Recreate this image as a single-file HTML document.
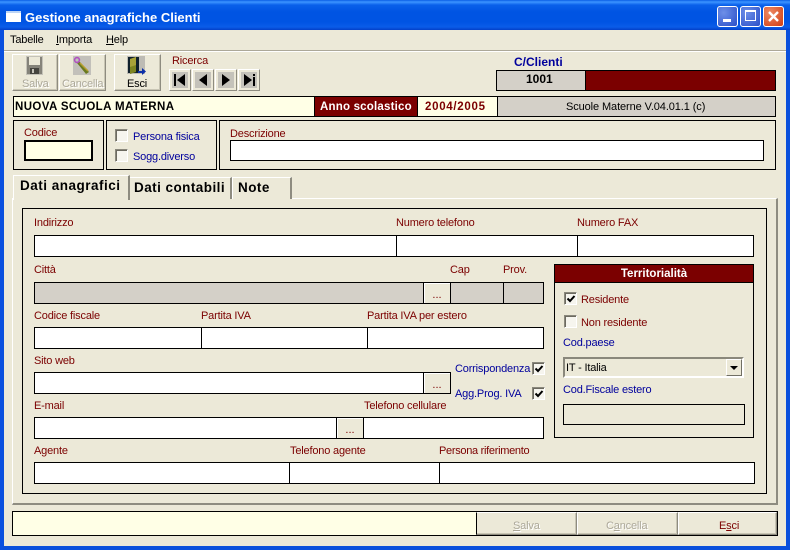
<!DOCTYPE html>
<html><head><meta charset="utf-8"><style>
html,body{margin:0;padding:0;width:790px;height:550px;overflow:hidden;background:#ece9d8}
body{position:relative;font-family:"Liberation Sans",sans-serif;font-size:11px;color:#000}
div,span.a{position:absolute;box-sizing:border-box}
.t{white-space:nowrap;line-height:13px;height:13px;letter-spacing:-.18px}
.r{color:#7b0000;margin-top:1px}.b{color:#00009c;margin-top:1px}
.f{background:#fff;border:1px solid #000;height:22px}
.g{background:#d4d0c8}
.box{border:1px solid #000}
.btn{background:#ece9d8;border:1px solid;border-color:#fff #8e8c80 #8e8c80 #fff;box-shadow:inset -1px -1px 0 #c8c5b4}
.dots{background:#ece9d8;border:1px solid #000;box-shadow:inset 1px 1px 0 #fff;color:#7b0000;text-align:center;line-height:24px;font-size:11px}
.cb{width:13px;height:13px;background:#f6f5ee;border:1px solid;border-color:#8a887c #fff #fff #8a887c;box-shadow:inset 1px 1px 0 #6c6a60}
.cb svg{position:absolute;left:1px;top:1px}
.n{top:69px;width:22px;height:22px;background:#ece9d8;border:1px solid;border-color:#fff #8e8c80 #8e8c80 #fff}
.n svg{position:absolute;left:2px;top:2px}
.wb{top:6px;width:21px;height:21px;border:1px solid #fff;border-radius:3px}
.dis{color:#aca899;text-shadow:1px 1px 0 #fff;margin-top:1px}
u{text-decoration:underline}
</style></head><body>
<!-- window frame -->
<div style="left:0;top:0;width:790px;height:550px;background:#0a50dc"></div>
<div style="left:0;top:0;width:790px;height:30px;background:linear-gradient(#0a5fe6 0,#3d95ff 2px,#0a60ea 5px,#0054e3 12px,#0054e3 22px,#0a5ce8 27px,#0340c8 30px)"></div>
<div style="left:0;top:30px;width:3px;height:520px;background:#0a50e0"></div>
<div style="left:4px;top:30px;width:782px;height:516px;background:#ece9d8"></div>
<!-- title -->
<div style="left:6px;top:11px;width:15px;height:11px;background:#fff;border-top:2px solid #bcd4f5"></div>
<div class="t" style="left:25px;top:10px;font-size:13px;line-height:15px;height:15px;font-weight:bold;color:#fff;letter-spacing:0">Gestione anagrafiche Clienti</div>
<div class="wb" style="left:717px;background:radial-gradient(circle at 30% 30%,#6d8fe8,#2a4fc8)"><div style="left:5px;top:12px;width:8px;height:3px;background:#fff"></div></div>
<div class="wb" style="left:740px;background:radial-gradient(circle at 30% 30%,#6d8fe8,#2a4fc8)"><div style="left:4px;top:3px;width:11px;height:11px;border:1px solid #fff;border-top-width:2px"></div></div>
<div class="wb" style="left:763px;background:radial-gradient(circle at 30% 30%,#ee8a64,#cf3c12)"><svg width="19" height="19" style="position:absolute;left:0;top:0"><path d="M5 5L14 14M14 5L5 14" stroke="#fff" stroke-width="2.4"/></svg></div>
<!-- menu -->
<div class="t" style="left:10px;top:34px">Tabelle</div>
<div class="t" style="left:56px;top:34px"><u>I</u>mporta</div>
<div class="t" style="left:106px;top:34px"><u>H</u>elp</div>
<div style="left:4px;top:50px;width:782px;height:2px;background:#fff;border-top:1px solid #aca899"></div>
<!-- toolbar -->
<div class="btn" style="left:12px;top:54px;width:46px;height:37px"></div>
<svg style="position:absolute;left:26px;top:56px" width="17" height="19"><rect width="17" height="19" fill="#c4c2b8"/><path d="M1 1H16V18H1Z" fill="#85837a"/><rect x="3" y="1" width="11" height="8" fill="#ece9d8"/><rect x="4" y="12" width="9" height="6" fill="#45443e"/><rect x="6" y="13" width="2" height="4" fill="#c4c2b8"/></svg>
<div class="t dis" style="left:22px;top:77px">Salva</div>
<div class="btn" style="left:59px;top:54px;width:47px;height:37px"></div>
<svg style="position:absolute;left:73px;top:56px" width="18" height="19"><rect width="18" height="19" fill="#c2c0ba"/><path d="M6 5L16 16L13 18L4 7Z" fill="#6a7a20"/><path d="M7 7L15 15" stroke="#b8a030" stroke-width="1.5"/><circle cx="4" cy="4" r="2.4" fill="none" stroke="#b050c0" stroke-width="1.6"/></svg>
<div class="t dis" style="left:62px;top:77px">Cancella</div>
<div class="btn" style="left:114px;top:54px;width:47px;height:37px"></div>
<svg style="position:absolute;left:127px;top:56px" width="20" height="20"><rect width="18" height="18" fill="#bdbbb4"/><rect x="1" y="1" width="11" height="16" fill="#10202c"/><path d="M3 3L9 1V16L3 18Z" fill="#7d8420"/><path d="M3 3L9 1V9L3 11Z" fill="#a8a238"/><path d="M11 15H15V12L19 15.5L15 19V17H11Z" fill="#0c2fa8"/></svg>
<div class="t" style="left:127px;top:78px">Esci</div>
<div class="t r" style="left:172px;top:54px">Ricerca</div>
<div class="n" style="left:169px"><svg width="16" height="16"><rect width="16" height="16" fill="#c4c2ba"/><path d="M2 2H4V14H2ZM13 2V14L5 8Z"/></svg></div>
<div class="n" style="left:192px"><svg width="16" height="16"><rect width="16" height="16" fill="#c4c2ba"/><path d="M12 2V14L4 8Z"/></svg></div>
<div class="n" style="left:215px"><svg width="16" height="16"><rect width="16" height="16" fill="#c4c2ba"/><path d="M4 2V14L12 8Z"/></svg></div>
<div class="n" style="left:238px"><svg width="16" height="16"><rect width="16" height="16" fill="#c4c2ba"/><path d="M3 2V14L11 8ZM12 2H14V4H12ZM12 5H14V14H12Z"/></svg></div>
<div class="t b" style="left:514px;top:55px;font-weight:bold;font-size:12px;letter-spacing:0">C/Clienti</div>
<div class="box g" style="left:496px;top:70px;width:90px;height:21px"></div>
<div class="t" style="left:526px;top:73px;font-weight:bold;font-size:12px;letter-spacing:0">1001</div>
<div class="box" style="left:585px;top:70px;width:191px;height:21px;background:#7b0000"></div>
<!-- info bar -->
<div class="box" style="left:13px;top:96px;width:302px;height:21px;background:#ffffe6"></div>
<div class="t" style="left:15px;top:101px;font-weight:bold;font-size:11.5px;letter-spacing:.4px">NUOVA SCUOLA MATERNA</div>
<div style="left:314px;top:96px;width:104px;height:21px;background:#7b0000;border:1px solid #000"></div>
<div class="t" style="left:320px;top:101px;font-weight:bold;color:#fff;font-size:11.5px;letter-spacing:.2px">Anno scolastico</div>
<div class="box" style="left:417px;top:96px;width:81px;height:21px;background:#ffffe6"></div>
<div class="t r" style="left:425px;top:100px;font-weight:bold;font-size:11.5px;letter-spacing:.7px">2004/2005</div>
<div class="box g" style="left:497px;top:96px;width:279px;height:21px"></div>
<div class="t" style="left:566px;top:101px;letter-spacing:-.1px">Scuole Materne V.04.01.1 (c)</div>
<!-- top group boxes -->
<div class="box" style="left:13px;top:120px;width:91px;height:50px"></div>
<div class="t r" style="left:24px;top:126px">Codice</div>
<div style="left:24px;top:140px;width:69px;height:21px;background:#ffffe6;border:2px solid #000"></div>
<div class="box" style="left:106px;top:120px;width:111px;height:50px"></div>
<div class="cb" style="left:115px;top:129px"></div>
<div class="t b" style="left:133px;top:130px">Persona fisica</div>
<div class="cb" style="left:115px;top:149px"></div>
<div class="t b" style="left:133px;top:150px">Sogg.diverso</div>
<div class="box" style="left:219px;top:120px;width:557px;height:50px"></div>
<div class="t r" style="left:230px;top:127px">Descrizione</div>
<div class="f" style="left:230px;top:140px;width:534px;height:21px"></div>
<!-- panel -->
<div style="left:12px;top:198px;width:766px;height:307px;background:#ece9d8;border:1px solid #fff;border-right:2px solid #8e8c80;border-bottom:2px solid #8e8c80"></div>
<!-- tabs -->
<div style="left:130px;top:177px;width:102px;height:22px;background:#ece9d8;border-top:1px solid #fff;border-right:2px solid #8e8c80"></div>
<div style="left:232px;top:177px;width:60px;height:22px;background:#ece9d8;border-top:1px solid #fff;border-right:2px solid #8e8c80;border-left:1px solid #fff"></div>
<div style="left:13px;top:175px;width:117px;height:25px;background:#ece9d8;border-top:1px solid #fff;border-left:1px solid #fff;border-right:2px solid #8e8c80"></div>
<div class="t" style="left:20px;top:178px;font-weight:bold;font-size:13.5px;line-height:15px;height:15px;letter-spacing:.5px">Dati anagrafici</div>
<div class="t" style="left:134px;top:180px;font-weight:bold;font-size:13.5px;line-height:15px;height:15px;letter-spacing:.45px">Dati contabili</div>
<div class="t" style="left:238px;top:180px;font-weight:bold;font-size:13.5px;line-height:15px;height:15px;letter-spacing:.45px">Note</div>
<div class="box" style="left:22px;top:208px;width:745px;height:286px"></div>
<!-- row 1 -->
<div class="t r" style="left:34px;top:216px">Indirizzo</div>
<div class="t r" style="left:396px;top:216px">Numero telefono</div>
<div class="t r" style="left:577px;top:216px">Numero FAX</div>
<div class="f" style="left:34px;top:235px;width:363px"></div>
<div class="f" style="left:396px;top:235px;width:182px"></div>
<div class="f" style="left:577px;top:235px;width:177px"></div>
<!-- row 2 -->
<div class="t r" style="left:34px;top:263px">Città</div>
<div class="t r" style="left:450px;top:263px">Cap</div>
<div class="t r" style="left:503px;top:263px">Prov.</div>
<div class="f g" style="left:34px;top:282px;width:390px"></div>
<div class="dots" style="left:423px;top:282px;width:28px;height:22px">...</div>
<div class="f g" style="left:450px;top:282px;width:54px"></div>
<div class="f g" style="left:503px;top:282px;width:41px"></div>
<!-- row 3 -->
<div class="t r" style="left:34px;top:309px">Codice fiscale</div>
<div class="t r" style="left:201px;top:309px">Partita IVA</div>
<div class="t r" style="left:367px;top:309px">Partita IVA per estero</div>
<div class="f" style="left:34px;top:327px;width:168px"></div>
<div class="f" style="left:201px;top:327px;width:167px"></div>
<div class="f" style="left:367px;top:327px;width:177px"></div>
<!-- row 4 -->
<div class="t r" style="left:34px;top:354px">Sito web</div>
<div class="f" style="left:34px;top:372px;width:390px"></div>
<div class="dots" style="left:423px;top:372px;width:28px;height:22px">...</div>
<div class="t b" style="left:455px;top:362px">Corrispondenza</div>
<div class="cb" style="left:532px;top:362px"><svg width="10" height="10"><path d="M1.5 4.5L4 7L8.5 2" fill="none" stroke="#000" stroke-width="2"/></svg></div>
<div class="t b" style="left:455px;top:387px">Agg.Prog. IVA</div>
<div class="cb" style="left:532px;top:387px"><svg width="10" height="10"><path d="M1.5 4.5L4 7L8.5 2" fill="none" stroke="#000" stroke-width="2"/></svg></div>
<!-- row 5 -->
<div class="t r" style="left:34px;top:399px">E-mail</div>
<div class="t r" style="left:364px;top:399px">Telefono cellulare</div>
<div class="f" style="left:34px;top:417px;width:303px"></div>
<div class="dots" style="left:336px;top:417px;width:28px;height:22px">...</div>
<div class="f" style="left:363px;top:417px;width:181px"></div>
<!-- row 6 -->
<div class="t r" style="left:34px;top:444px">Agente</div>
<div class="t r" style="left:290px;top:444px">Telefono agente</div>
<div class="t r" style="left:439px;top:444px;letter-spacing:-.3px">Persona riferimento</div>
<div class="f" style="left:34px;top:462px;width:256px"></div>
<div class="f" style="left:289px;top:462px;width:151px"></div>
<div class="f" style="left:439px;top:462px;width:316px"></div>
<!-- territorialita -->
<div class="box" style="left:554px;top:264px;width:200px;height:174px"></div>
<div style="left:554px;top:264px;width:200px;height:19px;background:#7b0000;border:1px solid #000;color:#fff;font-weight:bold;font-size:11.5px;text-align:center;line-height:18px">Territorialità</div>
<div class="cb" style="left:564px;top:292px"><svg width="10" height="10"><path d="M1.5 4.5L4 7L8.5 2" fill="none" stroke="#000" stroke-width="2"/></svg></div>
<div class="t r" style="left:581px;top:293px">Residente</div>
<div class="cb" style="left:564px;top:315px"></div>
<div class="t r" style="left:581px;top:316px">Non residente</div>
<div class="t b" style="left:563px;top:336px">Cod.paese</div>
<div style="left:563px;top:357px;width:181px;height:21px;background:#ece9d8;border:2px solid;border-color:#8a887c #fff #fff #8a887c"></div>
<div class="t" style="left:566px;top:362px">IT - Italia</div>
<div style="left:726px;top:359px;width:16px;height:17px;background:#ece9d8;border:1px solid;border-color:#fff #716f64 #716f64 #fff"><svg width="14" height="15" style="position:absolute;left:0;top:0"><path d="M3 6H11L7 10Z"/></svg></div>
<div class="t b" style="left:563px;top:383px">Cod.Fiscale estero</div>
<div class="box" style="left:563px;top:404px;width:182px;height:21px"></div>
<!-- bottom bar -->
<div class="box" style="left:12px;top:511px;width:766px;height:25px;background:#ffffe6"></div>
<div class="btn" style="left:476px;top:512px;width:101px;height:23px;border-left:1px solid #000"></div>
<div class="btn" style="left:577px;top:512px;width:101px;height:23px"></div>
<div class="btn" style="left:678px;top:512px;width:99px;height:23px"></div>
<div class="t dis" style="left:513px;top:519px"><u>S</u>alva</div>
<div class="t dis" style="left:606px;top:519px">C<u>a</u>ncella</div>
<div class="t r" style="left:719px;top:519px">E<u>s</u>ci</div>
</body></html>
